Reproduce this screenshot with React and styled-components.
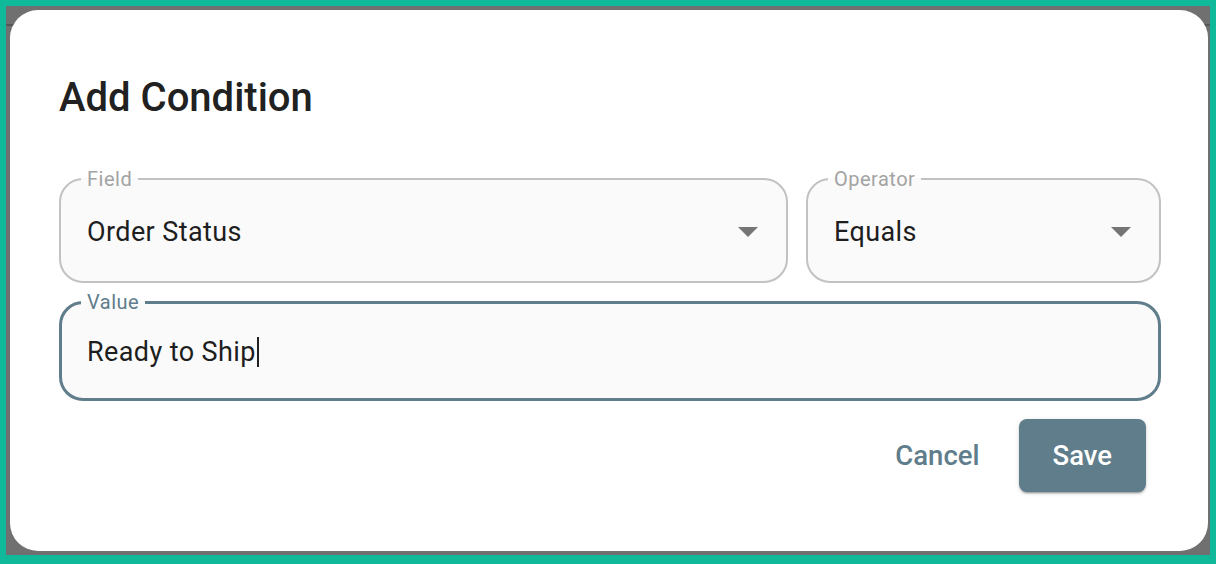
import React from 'react';
import styled, { createGlobalStyle, css } from 'styled-components';

const GlobalStyle = createGlobalStyle`
    * { box-sizing: border-box; }
    body {
        margin: 0;
        font-family: Roboto, "Liberation Sans", Arial, sans-serif;
        background: #0fb99a;
    }
`;

const Frame = styled.div`
    width: 1216px;
    height: 564px;
    display: flex;
    padding: 6px 6px 9px 6px;
    background: #0fb99a;
`;

const Backdrop = styled.div`
    flex: 1;
    display: flex;
    padding: 4px 2px 4px 4px;
    background: linear-gradient(to bottom, #707070 0 18px, #575757 18px 20px, #707070 20px);
`;

const Dialog = styled.div`
    flex: 1;
    display: flex;
    flex-direction: column;
    padding: 64px 47px 59px 49px;
    background: #fff;
    border-radius: 28px;
`;

const Title = styled.h2`
    margin: 0 0 47px;
    font-size: 40px;
    line-height: 48px;
    font-weight: 500;
    color: #212121;
`;

const Fields = styled.div`
    display: grid;
    grid-template-columns: minmax(0, 729fr) minmax(0, 355fr);
    gap: 9px 18px;
`;

const Outline = styled.fieldset`
    grid-column: ${props => props.wide ? '1 / -1' : 'auto'};
    min-width: 0;
    margin: 0;
    padding: 0 28px 0 26px;
    border: 2px solid #c2c2c2;
    border-radius: 24px;
    background: #fafafa;

    ${props => props.focused && css`
        border: 3px solid #607d8b;
        padding: 0 27px 0 25px;
    `}
`;

const Legend = styled.legend`
    margin-left: -6px;
    padding: 0 6px;
    font-size: 20px;
    line-height: 20px;
    letter-spacing: 0.5px;
    color: ${props => props.focused ? '#607d8b' : '#a3a3a3'};
`;

const Row = styled.div`
    display: flex;
    align-items: center;
    justify-content: space-between;
    height: ${props => props.focused ? '86px' : '92px'};
    padding-bottom: 7px;
`;

const InputText = styled.span`
    display: inline-flex;
    align-items: center;
    font-size: 27px;
    font-weight: 400;
    letter-spacing: 0.4px;
    color: #1e1e1e;
    white-space: nowrap;
`;

const Caret = styled.span`
    width: 2px;
    height: 30px;
    margin-left: 1px;
    background: #212121;
`;

const Arrow = () => (
    <svg width="20" height="10" viewBox="0 0 20 10">
        <path d="M0 0h20L10 10z" fill="#757575" />
    </svg>
);

const Actions = styled.div`
    display: flex;
    justify-content: flex-end;
    align-items: center;
    gap: 5px;
    margin-top: 18px;
    padding-right: 15px;
`;

const Button = styled.button`
    height: 73px;
    padding: 0 34px;
    border: none;
    border-radius: 8px;
    font-family: inherit;
    font-size: 27.5px;
    font-weight: 500;
    cursor: pointer;
    background: transparent;
    color: #607d8b;

    ${props => props.primary && css`
        background: #607d8b;
        color: #fff;
        box-shadow: 0 3px 1px -2px rgba(0,0,0,0.2), 0 2px 2px 0 rgba(0,0,0,0.14), 0 1px 5px 0 rgba(0,0,0,0.12);
    `}
`;

const SelectField = ({ label, value, wide }) => (
    <Outline wide={wide}>
        <Legend>{label}</Legend>
        <Row>
            <InputText>{value}</InputText>
            <Arrow />
        </Row>
    </Outline>
);

export default function App() {
    return (
        <>
            <GlobalStyle />
            <Frame>
                <Backdrop>
                    <Dialog>
                        <Title>Add Condition</Title>
                        <Fields>
                            <SelectField label="Field" value="Order Status" />
                            <SelectField label="Operator" value="Equals" />
                            <Outline wide focused>
                                <Legend focused>Value</Legend>
                                <Row focused>
                                    <InputText>Ready to Ship<Caret /></InputText>
                                </Row>
                            </Outline>
                        </Fields>
                        <Actions>
                            <Button>Cancel</Button>
                            <Button primary>Save</Button>
                        </Actions>
                    </Dialog>
                </Backdrop>
            </Frame>
        </>
    );
}
